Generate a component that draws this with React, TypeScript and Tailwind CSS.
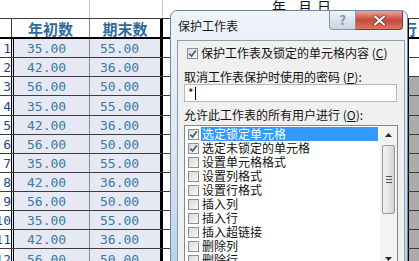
import React from "react";

const data: [string, string, string][] = [
  ["1", "35.00", "55.00"],
  ["2", "42.00", "36.00"],
  ["3", "56.00", "50.00"],
  ["4", "35.00", "55.00"],
  ["5", "42.00", "36.00"],
  ["6", "56.00", "50.00"],
  ["7", "35.00", "55.00"],
  ["8", "42.00", "36.00"],
  ["9", "56.00", "50.00"],
  ["10", "35.00", "55.00"],
  ["11", "42.00", "36.00"],
  ["12", "56.00", "50.00"],
];

const heights = [
  "h-[20px]",
  "h-[19px]",
  "h-[19px]",
  "h-[20px]",
  "h-[19px]",
  "h-[19px]",
  "h-[19px]",
  "h-[19px]",
  "h-[19px]",
  "h-[19px]",
  "h-[19px]",
  "h-[20px]",
];

const items: [string, boolean][] = [
  ["选定锁定单元格", true],
  ["选定未锁定的单元格", true],
  ["设置单元格格式", false],
  ["设置列格式", false],
  ["设置行格式", false],
  ["插入列", false],
  ["插入行", false],
  ["插入超链接", false],
  ["删除列", false],
  ["删除行", false],
];

function Check({ checked }: { checked: boolean }) {
  return (
    <span className="w-[11px] h-[11px] shrink-0 border border-[#8f8f8f] bg-gradient-to-br from-[#d8d8d8] to-[#fbfbfb] flex items-center justify-center">
      {checked && (
        <svg width="9" height="9" viewBox="0 0 9 9">
          <path d="M1.2 4.6 L3.6 7 L7.8 1.6" fill="none" stroke="#46598a" strokeWidth="1.7" />
        </svg>
      )}
    </span>
  );
}

export default function App() {
  return (
    <div className="relative w-[419px] h-[261px] overflow-hidden bg-white font-['Noto_Sans_CJK_SC',sans-serif]">
      {/* Spreadsheet */}
      <div className="flex flex-col">
        {/* Row 0 */}
        <div className="flex h-[18px]">
          <div className="w-[11px]" />
          <div className="w-[79px] border-r border-[#c8c8c8]" />
          <div className="w-[73px] border-r border-[#c8c8c8]" />
          <div className="flex-1 flex items-start pl-[109px] text-[14px] leading-[14px] text-[#111] -mt-[1px]">
            <span>年</span>
            <span className="ml-[12px]">月</span>
            <span className="ml-[5px]">日</span>
          </div>
          <div className="w-[11px]" />
        </div>
        {/* Header */}
        <div className="flex h-[19px] border-t border-[#3c3c3c]">
          <div className="w-[11px] bg-white" />
          <div className="w-[79px] border-l border-[#3c3c3c] border-r border-r-[#8a8a8a] flex items-center justify-center pt-[1px] text-[15px] leading-[15px] font-bold text-[#2c6aa0]">
            年初数
          </div>
          <div className="w-[73px] border-r-[3px] border-black flex items-center justify-center pt-[1px] text-[15px] leading-[15px] font-bold text-[#2c6aa0]">
            期末数
          </div>
          <div className="flex-1" />
          <div className="w-[11px] overflow-hidden border-l border-black flex items-center pt-[1px] text-[15px] leading-[15px] font-bold text-[#2c6aa0]">
            <span className="-ml-[7px]">行</span>
          </div>
        </div>
        {data.map((r, i) => (
          <div
            key={i}
            className={`flex ${heights[i]} ${i === 0 ? "border-t-2 border-black" : "border-t border-[#3c3c3c]"} font-['DejaVu_Sans_Mono',monospace] text-[13px] leading-[13px]`}
          >
            <div className="w-[11px] overflow-hidden flex justify-end items-end pb-[2px] text-[#27488a] bg-white">
              <span>{r[0]}</span>
            </div>
            <div className="w-[79px] border-l-[3px] border-double border-black border-r border-r-[#8a8a8a] bg-[#e6e9f3] flex items-end pb-[2px] pl-[13px] text-[#3a7aa6]">
              {r[1]}
            </div>
            <div className="w-[73px] border-r-[3px] border-black bg-[#e6e9f3] flex items-end pb-[2px] pl-[10px] text-[#3a7aa6]">
              {r[2]}
            </div>
            <div className="flex-1 bg-white" />
            <div className={`w-[11px] border-l border-black ${i >= 2 ? "bg-[#ababab]" : "bg-white"}`} />
          </div>
        ))}
      </div>

      {/* Dialog */}
      <div className="absolute left-[170px] top-[10px] w-[238px] h-[262px] rounded-t-[7px] border border-[#7487a0] bg-gradient-to-b from-[#eef3f8] via-[#dde7f1] to-[#b7d0ea] flex flex-col text-[12px] leading-[14px] text-[#111]">
        <div className="h-[29px] flex items-start shrink-0">
          <span className="mt-[8px] ml-[7px] text-[12px] leading-[14px] text-[#1a1a1a]">保护工作表</span>
          <div className="ml-auto mr-[4px] flex">
            <div className="w-[27px] h-[19px] rounded-bl-[4px] border border-[#8595a8] border-t-0 bg-gradient-to-b from-[#f2f5f9] via-[#dbe3ec] to-[#c9d5e2] flex items-center justify-center text-[13px] font-bold text-[#8796a8]">
              ?
            </div>
            <div className="w-[47px] h-[19px] rounded-br-[4px] border border-[#7d3a36] border-t-0 border-l-0 bg-gradient-to-b from-[#e9a596] via-[#c9483c] to-[#dc7560] flex items-center justify-center">
              <svg width="13" height="11" viewBox="0 0 13 11">
                <path d="M2 1.5 L11 9.5 M11 1.5 L2 9.5" stroke="#6b2620" strokeWidth="3.6" strokeLinecap="round" />
                <path d="M2 1.5 L11 9.5 M11 1.5 L2 9.5" stroke="#ffffff" strokeWidth="2.2" strokeLinecap="round" />
              </svg>
            </div>
          </div>
        </div>
        <div className="ml-[6px] mr-[2px] flex-1 border border-[#8d9db2] bg-[#f0f0f0] flex flex-col">
          <div className="mt-[5px] h-[14px] flex items-center pl-[9px]">
            <Check checked />
            <span className="ml-[3px]">
              保护工作表及锁定的单元格内容 (<u>C</u>)
            </span>
          </div>
          <div className="mt-[10px] h-[14px] pl-[6px] flex items-center">
            取消工作表保护时使用的密码 (<u>P</u>):
          </div>
          <div className="ml-[6px] w-[213px] h-[18px] border border-[#b5b8c0] bg-white flex items-center pl-[3px]">
            <span className="leading-[12px]">*</span>
            <span className="ml-[1px] w-[1px] h-[13px] bg-black" />
          </div>
          <div className="mt-[6px] h-[14px] pl-[6px] flex items-center">
            允许此工作表的所有用户进行 (<u>O</u>):
          </div>
          <div className="mt-[3px] ml-[6px] w-[214px] flex-1 border border-[#828790] bg-white flex">
            <div className="flex-1 pt-[1px] flex flex-col">
              {items.map(([t, c], i) => (
                <div key={i} className="h-[14px] flex items-center pl-[3px]">
                  <Check checked={c} />
                  <span className={`ml-[2px] w-[177px] h-[14px] pl-[1px] flex items-center ${i === 0 ? "bg-[#3399ff] text-white" : ""}`}>
                    {t}
                  </span>
                </div>
              ))}
            </div>
            <div className="w-[17px] bg-[#f3f3f3] flex flex-col items-center">
              <div className="h-[18px] w-full flex items-center justify-center">
                <svg width="7" height="4" viewBox="0 0 7 4">
                  <path d="M0 4 L3.5 0 L7 4 Z" fill="#2a2a2a" />
                </svg>
              </div>
              <div className="mt-[1px] w-[13px] h-[69px] rounded-[2px] border border-[#979797] bg-gradient-to-r from-[#f2f2f2] via-[#e6e6e6] to-[#d2d2d2] flex flex-col items-center justify-center gap-[2px]">
                <span className="w-[6px] h-[1px] bg-[#555]" />
                <span className="w-[6px] h-[1px] bg-[#555]" />
                <span className="w-[6px] h-[1px] bg-[#555]" />
              </div>
              <div className="mt-[38px] h-[14px] w-full flex items-center justify-center">
                <svg width="7" height="4" viewBox="0 0 7 4">
                  <path d="M0 0 L3.5 4 L7 0 Z" fill="#2a2a2a" />
                </svg>
              </div>
            </div>
          </div>
        </div>
      </div>
    </div>
  );
}
